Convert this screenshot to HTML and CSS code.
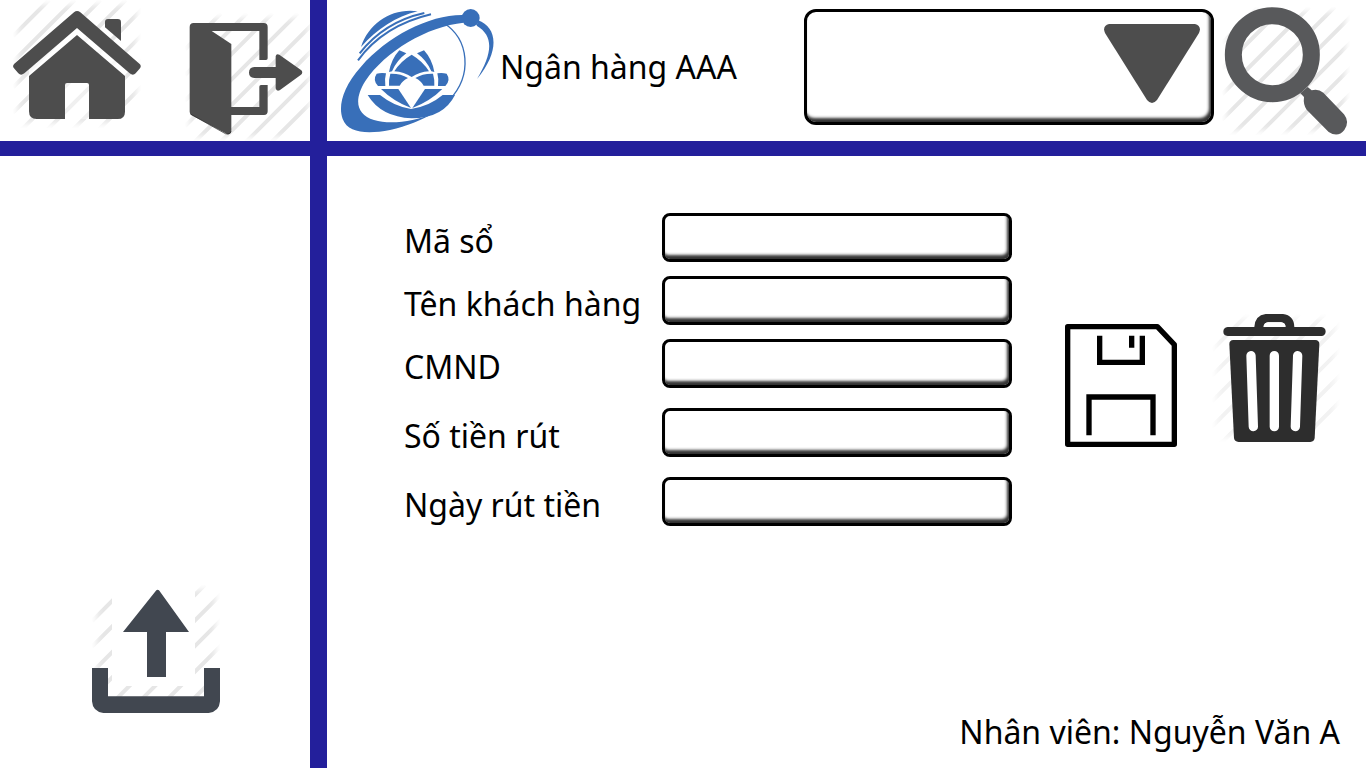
FILE: index.html
```html
<!DOCTYPE html>
<html lang="vi">
<head>
<meta charset="utf-8">
<meta name="viewport" content="width=device-width, initial-scale=1">
<title>Ngân hàng AAA</title>
<link rel="stylesheet" href="styles.css">
</head>
<body>
<svg class="defs" width="0" height="0" aria-hidden="true">
  <defs>
    <filter id="soft" x="-10%" y="-10%" width="120%" height="120%"><feGaussianBlur stdDeviation="9"/></filter>
    <mask id="fade" maskUnits="userSpaceOnUse" x="0" y="0" width="384" height="384">
      <rect x="14" y="14" width="356" height="356" fill="#fff" filter="url(#soft)"/>
    </mask>
    <symbol id="stripes" viewBox="0 0 384 384">
      <g mask="url(#fade)">
        <path d="M108 0L0 108M185 0L0 185M262 0L0 262M338 0L0 338M415 0L0 415M492 0L0 492M569 0L0 569M646 0L0 646" stroke="currentColor" stroke-width="12" fill="none"/>
      </g>
    </symbol>
  </defs>
</svg>
<div class="app">
  <nav class="tools" aria-label="Điều hướng">
    <button class="icon-button" type="button" aria-label="Trang chủ">
      <svg class="icon-tall" viewBox="39 0 384 423">
        <use href="#stripes" x="39" y="0" width="384" height="384"/>
        <path d="M231 82L376 209V229L231 105L87 229V209Z" fill="#fff" fill-opacity=".7"/>
        <path d="M195 249H267V357H195Z" fill="#fff" fill-opacity=".4"/>
        <g fill="#4d4d4d">
          <path d="M222 37Q231 29 241 37L419 192Q425 198 420 205L407 220Q399 228 389 220L231 84L73 220Q63 228 55 220L42 205Q36 198 43 191Z"/>
          <path d="M315 82V66Q315 57 324 57H353Q363 57 363 67V123Z"/>
          <path d="M231 105L375 228V335Q375 357 353 357H267V255Q267 249 261 249H201Q195 249 195 255V357H110Q87 357 87 334V228Z"/>
        </g>
      </svg>
    </button>
    <button class="icon-button" type="button" aria-label="Đăng xuất">
      <svg class="icon-tall" viewBox="75 0 384 423">
        <use href="#stripes" x="75" y="40" width="384" height="384"/>
        <g fill="#4d4d4d">
          <path d="M101 69H311Q323 69 323 81V175Q323 180 318 180H298V93H155L214 132V321H298V260Q298 255 303 255H323V334Q323 345 312 345H214V391Q214 405 201 402L94 345Q89 341 89 335V81Q89 69 101 69Z"/>
          <path d="M283 201H347V169Q349 159 359 165L424 211Q430 218 423 224L359 271Q349 275 347 265V234H283Q267 232 267 218Q267 202 283 201Z"/>
        </g>
        <path d="M91 342L196 401Q210 405 213 394" fill="none" stroke="#222" stroke-width="2"/>
      </svg>
    </button>
  </nav>

  <header class="banner">
    <svg class="logo" viewBox="30 21 468 378" role="img" aria-label="Logo ngân hàng">
      <g fill="#386fb9">
        <path d="M93 138C116 66 187 20 263 31C197 47 143 83 93 138Z"/>
        <path d="M400 42C300 40 173 105 93 197C38 258 24 315 38 354C54 397 113 400 180 387C231 375 276 356 308 338C254 361 181 372 132 357C78 340 71 296 106 240C166 150 292 76 401 65Z"/>
        <circle cx="422" cy="51" r="27"/>
        <path d="M444 58C502 79 511 149 441 234C487 157 493 105 440 74Z"/>
        <path d="M113 282H150Q192 316 243 324Q298 316 338 282H375Q340 352 245 352Q153 348 113 282Z"/>
        <path d="M153 264H205L243 321Q190 301 153 264Z"/>
        <path d="M337 264H285L247 321Q300 301 337 264Z"/>
        <path d="M208 148L229 157Q200 178 186 211L177 213Q184 174 208 148Z"/>
        <path d="M282 148L261 157Q290 178 304 211L313 213Q306 174 282 148Z"/>
        <path d="M245 161Q211 181 193 211Q222 213 245 228Q268 213 297 211Q279 181 245 161Z"/>
        <path d="M181 218Q212 217 234 231Q216 240 209 254H177Q176 235 181 218Z"/>
        <path d="M309 218Q278 217 256 231Q274 240 281 254H313Q314 235 309 218Z"/>
        <path d="M140 218Q153 215 168 217Q163 235 166 255H144Q127 237 140 218Z"/>
        <path d="M350 218Q337 215 322 217Q327 235 324 255H346Q363 237 350 218Z"/>
      </g>
      <g fill="none" stroke="#386fb9">
        <path stroke-width="6" d="M89 157C135 98 197 55 283 36M84 178C133 111 209 62 303 40"/>
        <path stroke-width="4" d="M341 66C418 115 428 223 358 297Q326 330 288 345"/>
      </g>
    </svg>
    <h1 class="brand">Ngân hàng AAA</h1>
    <div class="picker">
      <select class="picker-field" aria-label="Danh mục"><option></option></select>
      <svg class="picker-arrow" viewBox="0 0 96 80" aria-hidden="true">
        <path d="M5 0H91Q98 2 95 9L53 76Q48 82 43 76L1 9Q-2 2 5 0Z" fill="#4d4d4d"/>
      </svg>
    </div>
    <button class="icon-button" type="button" aria-label="Tìm kiếm">
      <svg class="icon-tall" viewBox="36 0 384 423">
        <use href="#stripes" x="36" y="21" width="384" height="384"/>
        <circle cx="187" cy="164" r="117" fill="none" stroke="#58595b" stroke-width="51"/>
        <path d="M271 280L293 261L305 271Q324 265 340 278L402 343Q420 366 403 390Q384 414 356 396L290 329Q279 314 282 291Z" fill="#58595b"/>
      </svg>
    </button>
  </header>

  <aside class="side">
    <button class="icon-button" type="button" aria-label="Tải lên">
      <svg class="icon" viewBox="66 45 384 384">
        <use href="#stripes" x="66" y="45" width="384" height="384"/>
        <path d="M126 45H375V348H126Z" fill="#fff"/>
        <path d="M66 294H114V379H402V294H450V394Q448 425 416 429H100Q68 425 66 394Z" fill="#414750"/>
        <path d="M259 61Q263 57 267 61L357 186H288V321H231V186H159Z" fill="#414750"/>
      </svg>
    </button>
  </aside>

  <main class="content">
    <div class="work">
      <form class="form">
        <div class="group">
          <div class="row"><label class="label" for="code">Mã sổ</label><input class="field" id="code" type="text"></div>
          <div class="row"><label class="label" for="customer">Tên khách hàng</label><input class="field" id="customer" type="text"></div>
          <div class="row"><label class="label" for="idcard">CMND</label><input class="field" id="idcard" type="text"></div>
        </div>
        <div class="group group-wide">
          <div class="row"><label class="label" for="amount">Số tiền rút</label><input class="field" id="amount" type="text"></div>
          <div class="row"><label class="label" for="date">Ngày rút tiền</label><input class="field" id="date" type="text"></div>
        </div>
      </form>
      <div class="actions">
        <button class="icon-button" type="button" aria-label="Lưu">
          <svg class="icon-save" viewBox="45 42 336 399">
            <path d="M53 80H322L373 134V433H53Z" fill="none" stroke="#000" stroke-width="16" stroke-linejoin="round"/>
            <path d="M149 107V187H277V107M245 107V143M117 406V291H309V406" fill="none" stroke="#000" stroke-width="16"/>
          </svg>
        </button>
        <button class="icon-button" type="button" aria-label="Xóa">
          <svg class="icon icon-faint" viewBox="485 42 384 384">
            <use href="#stripes" x="485" y="42" width="384" height="384"/>
            <g fill="#2d2d2d">
              <path fill-rule="evenodd" d="M532 81H612Q614 46 646 42H698Q731 46 732 81H813Q826 83 826 95Q825 107 813 108H532Q519 106 519 95Q519 83 532 81ZM639 81H706Q706 69 692 67H653Q640 69 639 81Z"/>
              <path d="M549 120H795Q807 121 807 132L793 414Q792 425 780 426H565Q552 425 551 414L537 132Q537 121 549 120Z"/>
            </g>
            <path d="M641 80Q641 68 653 67H692Q705 68 705 80Z" fill="#fff"/>
            <path d="M602 167L609 380M672 167V380M742 167L735 380" stroke="#fff" stroke-width="28" stroke-linecap="round"/>
          </svg>
        </button>
      </div>
    </div>
    <p class="staff">Nhân viên: Nguyễn Văn A</p>
  </main>
</div>
</body>
</html>
```
FILE: styles.css
```css
* {
  box-sizing: border-box;
}

body {
  margin: 0;
  background: #fff;
  color: #000;
  font-family: "Noto Sans", "Open Sans", sans-serif;
  font-size: 32px;
  line-height: 48px;
}

.defs {
  position: absolute;
}

.app {
  display: grid;
  grid-template-columns: 310px 1fr;
  grid-template-rows: auto 1fr;
  gap: 15px 17px;
  min-height: 100vh;
  background: #231f9b;
}

.tools,
.banner,
.side,
.content {
  display: flex;
  background: #fff;
}

.tools {
  gap: 44px;
  padding-left: 13px;
  overflow: hidden;
}

.icon-button {
  flex: none;
  display: block;
  padding: 0;
  border: 0;
  background: none;
  color: #e6e6e6;
  cursor: pointer;
}

.icon-button svg {
  display: block;
}

.icon {
  width: 128px;
  height: 128px;
}

.icon-tall {
  width: 128px;
  height: 141px;
}

.icon-save {
  width: 112px;
  height: 133px;
}

.icon-faint {
  color: #f2f2f2;
}

.banner {
  align-items: center;
  padding: 0 16px 0 13px;
}

.logo {
  flex: none;
  width: 156px;
  height: 126px;
}

.brand {
  margin: 0 auto 8px 4px;
  font-size: 32px;
  font-weight: 400;
  white-space: nowrap;
}

.picker {
  position: relative;
  width: 410px;
  margin: 0 8px 8px 0;
}

.picker-field,
.field {
  display: block;
  width: 100%;
  border: 3px solid #000;
  background: #fff;
  color: #000;
  font: inherit;
}

.picker-field {
  appearance: none;
  height: 116px;
  padding: 0 112px 0 16px;
  border-radius: 12px;
  box-shadow: inset -2px -4px 3px #333;
}

.picker-arrow {
  position: absolute;
  top: 15px;
  right: 14px;
  width: 96px;
  height: 80px;
  pointer-events: none;
}

.side {
  align-items: flex-end;
  justify-content: center;
  padding: 0 0 55px 2px;
}

.content {
  flex-direction: column;
  justify-content: space-between;
  padding: 57px 26px 12px 77px;
}

.work {
  display: flex;
  justify-content: space-between;
}

.form,
.group {
  display: flex;
  flex-direction: column;
}

.form {
  gap: 20px;
}

.group {
  gap: 14px;
}

.group-wide {
  gap: 20px;
}

.row {
  display: grid;
  grid-template-columns: 258px 350px;
  height: 49px;
}

.label {
  padding-top: 4px;
  white-space: nowrap;
}

.field {
  height: 49px;
  padding: 0 12px;
  border-radius: 8px;
  box-shadow: inset -2px -4px 3px #333;
}

.actions {
  display: flex;
  align-items: flex-start;
  gap: 35px;
  padding-top: 101px;
}

.staff {
  margin: 0;
  text-align: right;
}
```
